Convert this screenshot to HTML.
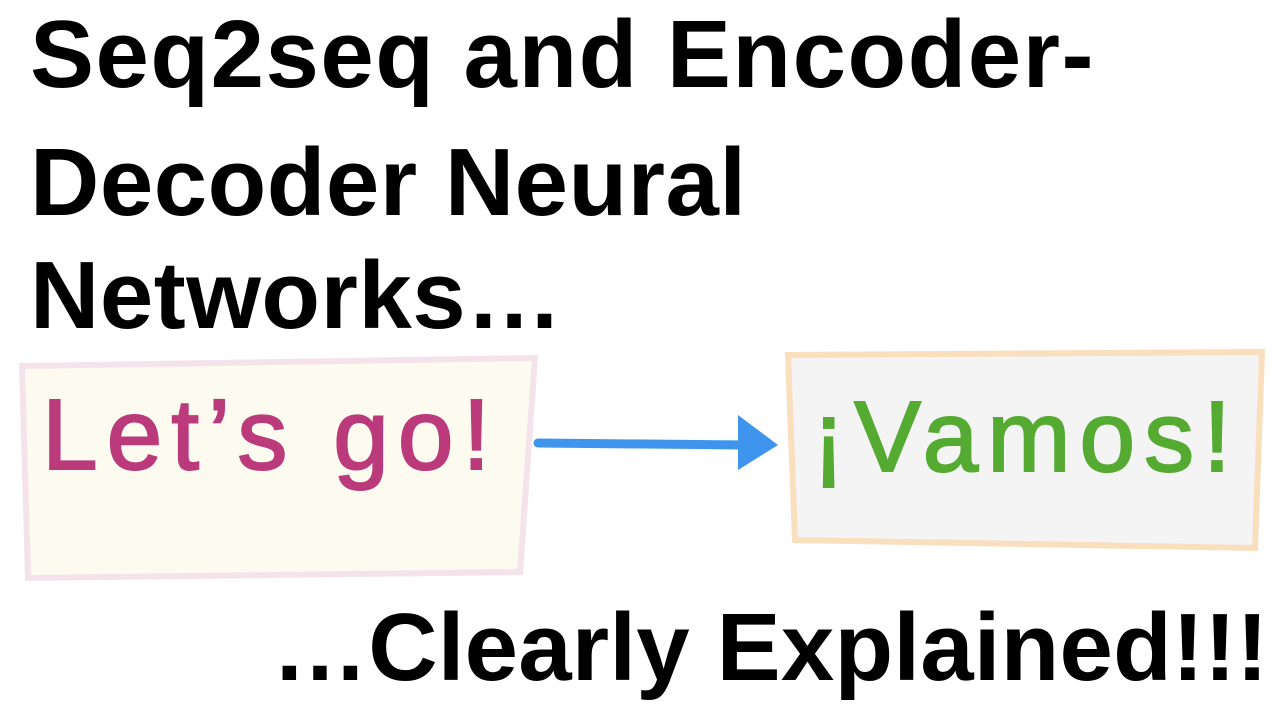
<!DOCTYPE html>
<html><head><meta charset="utf-8"><style>
body{margin:0;width:1280px;height:720px;background:#fff;overflow:hidden;position:relative;font-family:"Liberation Sans",sans-serif}
.t{position:absolute;font-weight:bold;font-size:96px;color:#000;white-space:nowrap;letter-spacing:0.5px}
.h{position:absolute;font-size:100px;white-space:nowrap;letter-spacing:9px;-webkit-text-stroke:2px}
</style></head><body>
<div class="t" style="left:30px;top:0px;letter-spacing:1.5px">Seq2seq and Encoder-</div>
<div class="t" style="left:30px;top:128px">Decoder Neural</div>
<div class="t" style="left:30px;top:241px">Networks…</div>
<div class="t" style="left:272px;top:593px;letter-spacing:0.2px">…Clearly Explained!!!</div>
<svg width="1280" height="720" style="position:absolute;left:0;top:0">
<polygon points="22,366 535,358 520,572 28,578" fill="#fdfbf0" stroke="#f5e3ec" stroke-width="6"/>
<polygon points="788,355 1262,352 1255,548 795,540" fill="#f4f4f4" stroke="#f9dfbd" stroke-width="6"/>
<line x1="538" y1="443" x2="745" y2="445" stroke="#3f95ee" stroke-width="9" stroke-linecap="round"/>
<polygon points="738,415 778,445 738,470" fill="#3f95ee"/>
</svg>
<div class="h" style="left:42px;top:378px;color:#ba3a7c">Let’s go!</div>
<div class="h" style="left:812px;top:380px;color:#55aa32">¡Vamos!</div>
</body></html>
